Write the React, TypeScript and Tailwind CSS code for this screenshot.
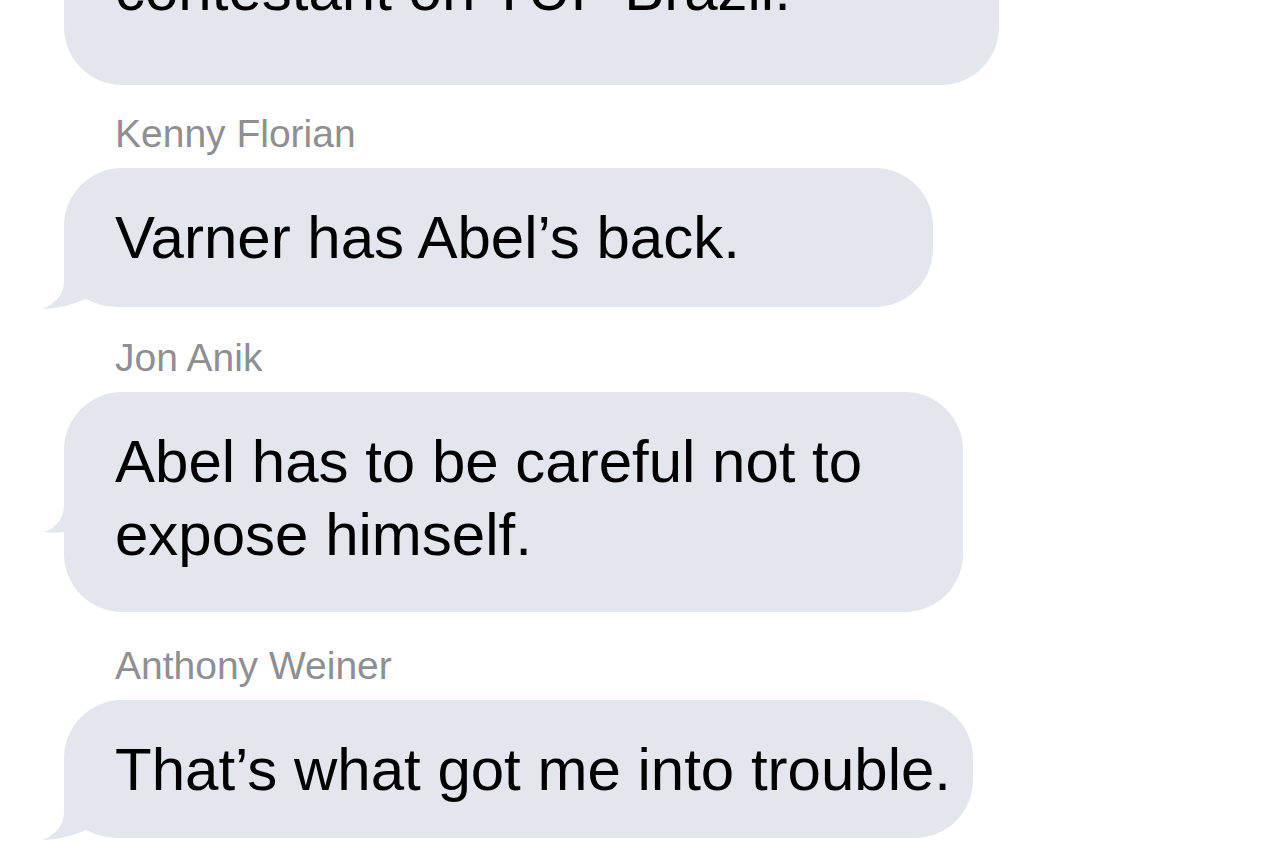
import React from 'react';

type Msg = {
  sender?: string;
  lines: string[];
  labelGap?: string;
  bubble: string;
  tail?: 'bottom' | 'middle';
};

const messages: Msg[] = [
  {
    lines: ['contestant on TUF Brazil.'],
    bubble: 'w-[935px] -mt-[80px] pt-[33px] pb-[59px]',
  },
  {
    sender: 'Kenny Florian',
    lines: ['Varner has Abel\u2019s back.'],
    labelGap: 'mt-[26px]',
    bubble: 'w-[869px] pt-[33px] pb-[33px]',
    tail: 'bottom',
  },
  {
    sender: 'Jon Anik',
    lines: ['Abel has to be careful not to', 'expose himself.'],
    labelGap: 'mt-[28px]',
    bubble: 'w-[899px] pt-[33px] pb-[41px]',
    tail: 'middle',
  },
  {
    sender: 'Anthony Weiner',
    lines: ['That\u2019s what got me into trouble.'],
    labelGap: 'mt-[31px]',
    bubble: 'w-[909px] pt-[33px] pb-[32px]',
    tail: 'bottom',
  },
];

// bubble tail sitting on the bottom-left corner
const BottomTail: React.FC = () => (
  <svg
    className="absolute -left-[22px] -bottom-[2px] w-[80px] h-[60px]"
    viewBox="0 0 80 60"
  >
    <path
      d="M22 0 L22 32 C22 45 14 55 0 60 C14 60 30 56 44 50 C56 56 66 58 80 58 L80 0 Z"
      fill="#e4e6ee"
    />
  </svg>
);

// the stretched bubble keeps its horn halfway down the left side
const MiddleTail: React.FC = () => (
  <svg className="absolute -left-[21px] top-[112px] w-[22px] h-[30px]" viewBox="0 0 22 30">
    <path d="M21 0 C21 14 14 24 0 28 C8 29 15 29 22 28 L22 0 Z" fill="#e4e6ee" />
  </svg>
);

export default function App() {
  return (
    <div
      className="min-h-screen w-full overflow-hidden bg-white pl-[64px]"
      style={{ fontFamily: '"Liberation Sans", Arial, sans-serif' }}
    >
      <div className="flex flex-col items-start">
        {messages.map((m, i) => (
          <React.Fragment key={i}>
            {m.sender && (
              <div
                className={`${m.labelGap} mb-[12px] pl-[51px] text-[39px] leading-[45px] text-[#8e8e93]`}
              >
                {m.sender}
              </div>
            )}
            <div
              className={`relative rounded-[58px] bg-[#e4e6ee] pl-[51px] text-[60px] leading-[73px] text-black whitespace-nowrap ${m.bubble}`}
            >
              {m.tail === 'bottom' && <BottomTail />}
              {m.tail === 'middle' && <MiddleTail />}
              {m.lines.map((line, j) => (
                <div key={j} className="relative">
                  {line}
                </div>
              ))}
            </div>
          </React.Fragment>
        ))}
      </div>
    </div>
  );
}
